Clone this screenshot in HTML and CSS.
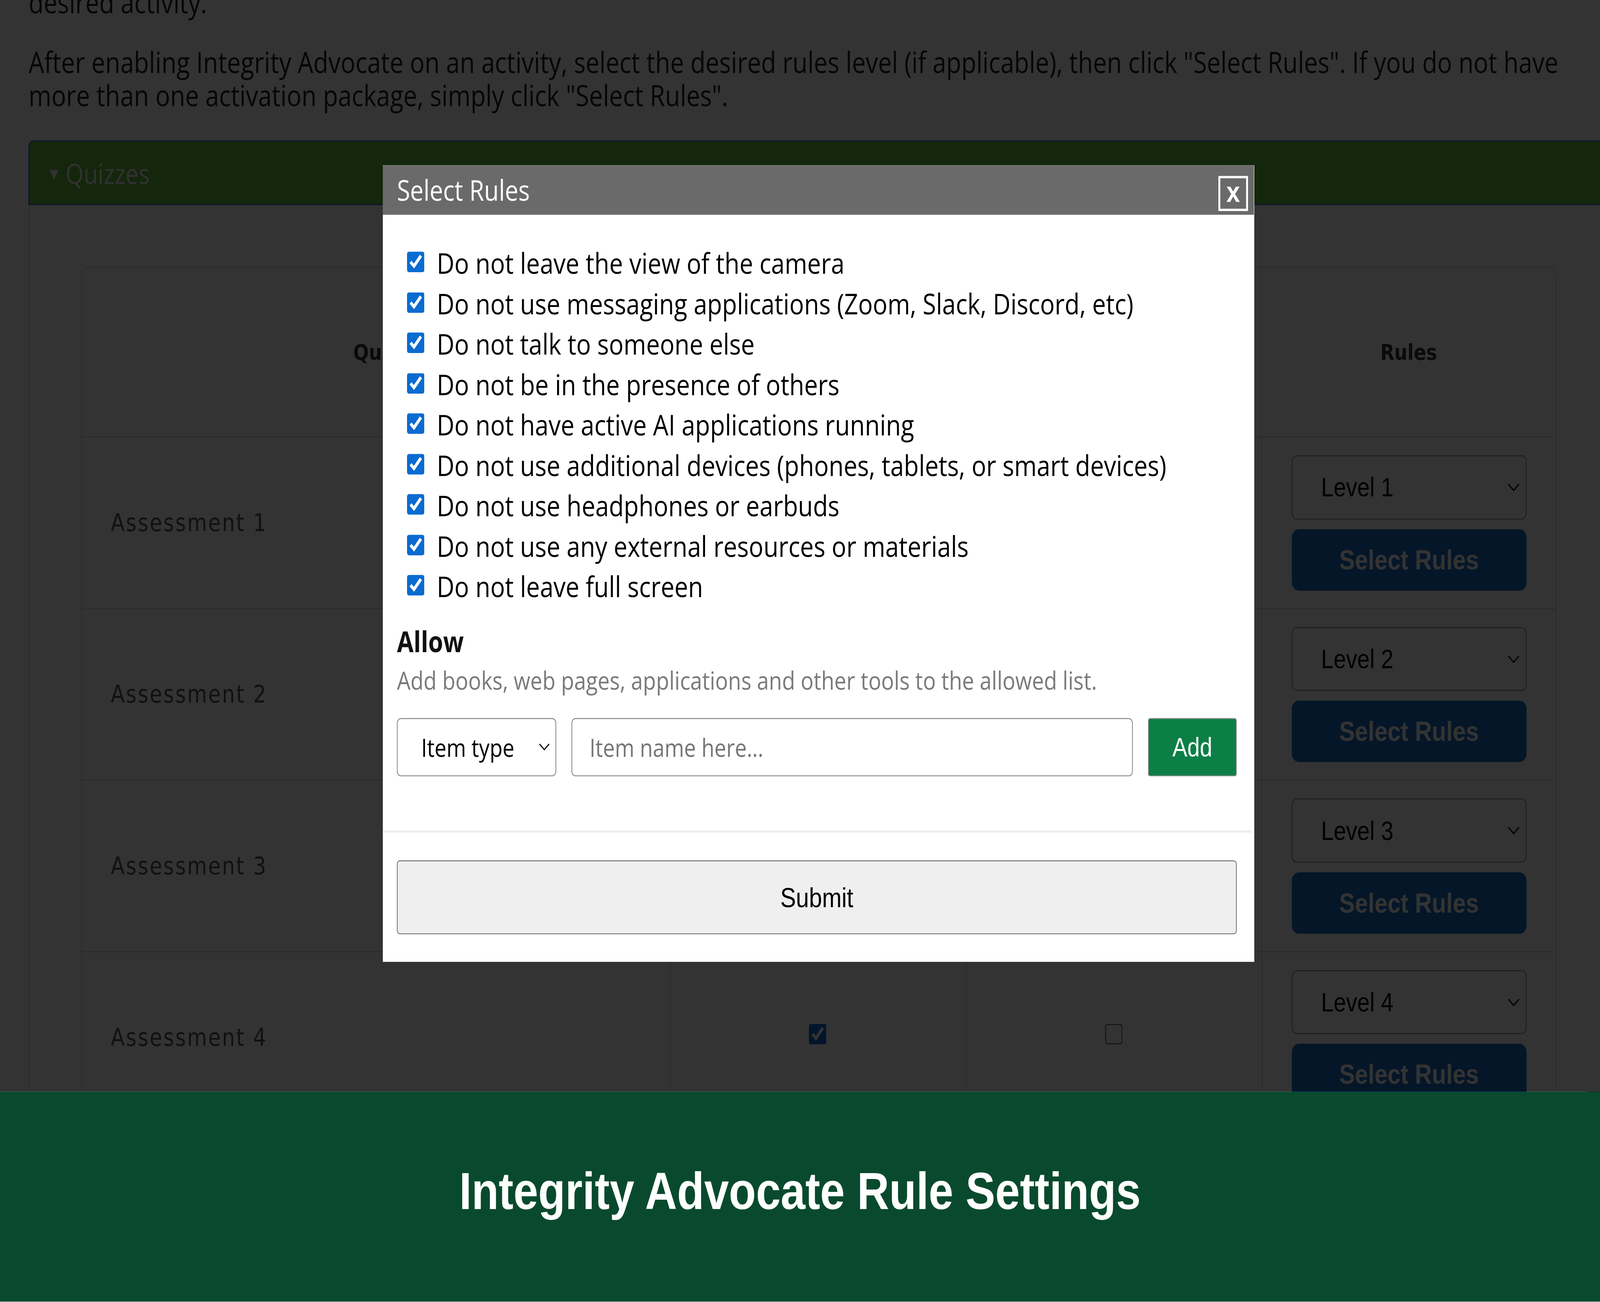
FILE: index.html
```html
<!DOCTYPE html>
<html lang="en">
    <head>
        <meta charset="UTF-8" />
        <meta name="viewport" content="width=device-width, initial-scale=1.0" />
        <title>Integrity Advocate Rule Settings</title>
        <link rel="stylesheet" href="styles.css">
    </head>
    <body>
        <div class="screen">
            <div class="stage">
                <div class="page">
                    <p class="intro">desired activity.</p>
                    <p class="intro">After enabling Integrity Advocate on an activity, select the desired rules level (if applicable), then click "Select Rules". If you do not have more than one activation package, simply click "Select Rules".</p>

                    <div class="accordion">
                        <div class="accordion-head"><span class="caret">&#9662;</span>Quizzes</div>
                        <div class="accordion-body">
                            <table class="quiz-table">
                                <colgroup>
                                    <col class="col-name">
                                    <col class="col-check">
                                    <col class="col-check">
                                    <col class="col-rules">
                                </colgroup>
                                <thead>
                                    <tr>
                                        <th>Quiz</th>
                                        <th>Enabled</th>
                                        <th>Required</th>
                                        <th>Rules</th>
                                    </tr>
                                </thead>
                                <tbody>
                                    <tr>
                                        <td class="quiz-name">Assessment 1</td>
                                        <td class="check-cell"><input type="checkbox" checked></td>
                                        <td class="check-cell"><input type="checkbox"></td>
                                        <td class="rules-cell">
                                            <div class="level-select">
                                                <select><option>Level 1</option></select>
                                                <svg class="chevron" viewBox="0 0 14 8"><path d="M1 1l6 6 6-6" /></svg>
                                            </div>
                                            <button class="rules-btn">Select Rules</button>
                                        </td>
                                    </tr>
                                    <tr>
                                        <td class="quiz-name">Assessment 2</td>
                                        <td class="check-cell"><input type="checkbox" checked></td>
                                        <td class="check-cell"><input type="checkbox"></td>
                                        <td class="rules-cell">
                                            <div class="level-select">
                                                <select><option>Level 2</option></select>
                                                <svg class="chevron" viewBox="0 0 14 8"><path d="M1 1l6 6 6-6" /></svg>
                                            </div>
                                            <button class="rules-btn">Select Rules</button>
                                        </td>
                                    </tr>
                                    <tr>
                                        <td class="quiz-name">Assessment 3</td>
                                        <td class="check-cell"><input type="checkbox" checked></td>
                                        <td class="check-cell"><input type="checkbox"></td>
                                        <td class="rules-cell">
                                            <div class="level-select">
                                                <select><option>Level 3</option></select>
                                                <svg class="chevron" viewBox="0 0 14 8"><path d="M1 1l6 6 6-6" /></svg>
                                            </div>
                                            <button class="rules-btn">Select Rules</button>
                                        </td>
                                    </tr>
                                    <tr>
                                        <td class="quiz-name">Assessment 4</td>
                                        <td class="check-cell"><input type="checkbox" checked></td>
                                        <td class="check-cell"><input type="checkbox"></td>
                                        <td class="rules-cell">
                                            <div class="level-select">
                                                <select><option>Level 4</option></select>
                                                <svg class="chevron" viewBox="0 0 14 8"><path d="M1 1l6 6 6-6" /></svg>
                                            </div>
                                            <button class="rules-btn">Select Rules</button>
                                        </td>
                                    </tr>
                                </tbody>
                            </table>
                        </div>
                    </div>
                </div>

                <div class="backdrop"></div>

                <div class="modal">
                    <div class="modal-head">
                        <span class="modal-title">Select Rules</span>
                        <button class="modal-close">x</button>
                    </div>
                    <div class="modal-body">
                        <ul class="rule-list">
                            <li class="rule"><input type="checkbox" checked><span>Do not leave the view of the camera</span></li>
                            <li class="rule"><input type="checkbox" checked><span>Do not use messaging applications (Zoom, Slack, Discord, etc)</span></li>
                            <li class="rule"><input type="checkbox" checked><span>Do not talk to someone else</span></li>
                            <li class="rule"><input type="checkbox" checked><span>Do not be in the presence of others</span></li>
                            <li class="rule"><input type="checkbox" checked><span>Do not have active AI applications running</span></li>
                            <li class="rule"><input type="checkbox" checked><span>Do not use additional devices (phones, tablets, or smart devices)</span></li>
                            <li class="rule"><input type="checkbox" checked><span>Do not use headphones or earbuds</span></li>
                            <li class="rule"><input type="checkbox" checked><span>Do not use any external resources or materials</span></li>
                            <li class="rule"><input type="checkbox" checked><span>Do not leave full screen</span></li>
                        </ul>

                        <div class="allow-title">Allow</div>
                        <div class="allow-desc">Add books, web pages, applications and other tools to the allowed list.</div>

                        <div class="allow-form">
                            <div class="type-select">
                                <select><option>Item type</option></select>
                                <svg class="chevron small" viewBox="0 0 14 8"><path d="M1 1l6 6 6-6" /></svg>
                            </div>
                            <input class="item-input" type="text" placeholder="Item name here...">
                            <button class="add-btn">Add</button>
                        </div>

                        <hr class="modal-divider">

                        <button class="submit-btn">Submit</button>
                    </div>
                </div>
            </div>

            <div class="banner">
                <h2>Integrity Advocate Rule Settings</h2>
            </div>
        </div>
    </body>
</html>
```

FILE: styles.css
```css
:root {
    --page-text: #1e1e1e;
    --quiz-green: #64be3c;
    --row-line: #d8d8d8;
    --rules-blue: #1a6ec8;
    --modal-gray: #6a6a6a;
    --check-blue: #0b6bd0;
    --add-green: #0b7f46;
    --banner-green: #094a2e;
}

/* layout is drawn at 1568x1079, the window is 4096x3334 */
html {
    zoom: 2.6122;
}

body {
    margin: 0;
    height: 1276px;
    overflow: hidden;
    font-family: "Open Sans", "Noto Sans", sans-serif;
    color: var(--page-text);
    background-color: white;
}

.screen {
    width: 1568px;
    height: 1079px;
    display: flex;
    flex-direction: column;
    transform-origin: 0 0;
    transform: scaleY(1.18255);
}

.stage {
    position: relative;
    flex: 1;
    overflow: hidden;
}

.page {
    padding: 0 28px;
    margin-top: -12px;
}

.intro {
    margin: 0 0 22px;
    font-size: 24.1px;
    line-height: 27.5px;
}

/* quizzes accordion */

.accordion {
    margin-top: 24px;
    margin-right: -80px;
}

.accordion-head {
    height: 52px;
    display: flex;
    align-items: center;
    padding-left: 20px;
    background-color: var(--quiz-green);
    border-top: 1px solid #1c3cff;
    border-bottom: 1px solid #1c3cff;
    border-left: 1px solid #1c3cff;
    border-radius: 5px 0 0 0;
    color: #f4f4f4;
    font-size: 22.8px;
}

.caret {
    font-size: 17px;
    margin-right: 7px;
}

.accordion-body {
    border-left: 1px solid var(--row-line);
    padding: 51px 0 0 51px;
}

.quiz-table {
    width: 1444px;
    table-layout: fixed;
    border-collapse: separate;
    border-spacing: 0;
    border: 1px solid var(--row-line);
    border-radius: 8px;
}

.col-name {
    width: 576px;
}

.col-check {
    width: 290px;
}

.col-rules {
    width: 288px;
}

.quiz-table th {
    height: 138px;
    font-family: "DejaVu Sans", sans-serif;
    font-weight: bold;
    font-size: 18px;
    color: #333;
    text-align: center;
}

.quiz-table td {
    border-top: 1px solid var(--row-line);
    vertical-align: middle;
}

.quiz-table td + td {
    border-left: 1px solid var(--row-line);
}

.quiz-name {
    padding-left: 28px;
    font-family: "DejaVu Sans", sans-serif;
    font-size: 20px;
    letter-spacing: 1.2px;
    color: #555;
}

.check-cell {
    text-align: center;
}

.check-cell input {
    width: 18px;
    height: 18px;
    margin: 0;
    accent-color: var(--check-blue);
}

.rules-cell {
    padding: 15px 0 14.5px;
    display: flex;
    flex-direction: column;
    align-items: center;
    gap: 8px;
}

.level-select {
    position: relative;
    width: 230px;
    height: 53px;
}

.level-select select {
    appearance: none;
    width: 100%;
    height: 100%;
    padding-left: 28px;
    border: 1px solid #8f8f8f;
    border-radius: 5px;
    background-color: white;
    font-family: "Liberation Sans", Arial, sans-serif;
    font-size: 22px;
    color: #000;
}

.chevron {
    position: absolute;
    right: 6px;
    top: 23px;
    width: 13px;
    height: 7px;
    fill: none;
    stroke: #000;
    stroke-width: 1.3;
}

.chevron.small {
    right: 6px;
    top: 20px;
    width: 11px;
    height: 7px;
}

.rules-btn {
    width: 230px;
    height: 51px;
    border: none;
    border-radius: 7px;
    background-color: var(--rules-blue);
    color: white;
    font-family: "Liberation Sans", Arial, sans-serif;
    font-weight: bold;
    font-size: 23px;
}

/* modal */

.backdrop {
    position: absolute;
    inset: 0;
    background-color: rgba(0, 0, 0, 0.8);
}

.modal {
    position: absolute;
    left: 375px;
    top: 137px;
    width: 854px;
    background-color: white;
}

.modal-head {
    height: 41px;
    display: flex;
    justify-content: space-between;
    padding: 0 6px 0 14px;
    background-color: var(--modal-gray);
}

.modal-title {
    align-self: center;
    color: white;
    font-size: 23.5px;
}

.modal-close {
    margin-top: 9px;
    width: 29px;
    height: 29px;
    padding: 0 0 2px;
    border: 2px solid white;
    background-color: var(--modal-gray);
    color: white;
    font-family: "Liberation Sans", Arial, sans-serif;
    font-weight: bold;
    font-size: 24px;
    line-height: 1;
    display: flex;
    align-items: flex-end;
    justify-content: center;
}

.modal-body {
    padding: 23px 17px 23px 14px;
}

.rule-list {
    list-style: none;
    margin: 0;
    padding: 0 0 0 10px;
}

.rule {
    height: 33.5px;
    display: flex;
    align-items: center;
    gap: 11px;
    font-size: 23.9px;
    color: #000;
}

.rule input {
    width: 18px;
    height: 18px;
    margin: 0;
    accent-color: var(--check-blue);
}

.allow-title {
    margin-top: 14px;
    font-weight: bold;
    font-size: 23.6px;
    line-height: 30px;
    color: #111;
}

.allow-desc {
    margin-top: 3px;
    font-size: 21px;
    line-height: 28px;
    color: #7a7a7a;
}

.allow-form {
    display: flex;
    gap: 15px;
    height: 48px;
    margin-top: 18px;
}

.type-select {
    position: relative;
    width: 156px;
}

.type-select select {
    appearance: none;
    width: 100%;
    height: 100%;
    padding-left: 23px;
    border: 1px solid #8a8a8a;
    border-radius: 4px;
    background-color: white;
    font-family: "Open Sans", sans-serif;
    font-size: 20.7px;
    color: #000;
}

.item-input {
    flex: 1;
    padding: 0 17px;
    border: 1px solid #8a8a8a;
    border-radius: 4px;
    font-family: "Open Sans", sans-serif;
    font-size: 20.7px;
}

.item-input::placeholder {
    color: #767676;
}

.add-btn {
    width: 87px;
    border: 1px solid #8a8a8a;
    border-radius: 2px;
    background-color: var(--add-green);
    color: white;
    font-family: "Liberation Sans", Arial, sans-serif;
    font-size: 22px;
}

.modal-divider {
    margin: 45px -14px 0 -14px;
    border: none;
    border-top: 2px solid #eeeeee;
}

.submit-btn {
    display: block;
    width: 100%;
    height: 61px;
    margin-top: 23px;
    border: 1px solid #767676;
    border-radius: 3px;
    background-color: #efefef;
    color: #000;
    font-family: "Liberation Sans", Arial, sans-serif;
    font-size: 23px;
}

/* caption */

.banner {
    height: 174px;
    padding-bottom: 10px;
    box-sizing: border-box;
    display: flex;
    align-items: center;
    justify-content: center;
    background-color: var(--banner-green);
}

.banner h2 {
    margin: 0;
    color: white;
    font-family: "Liberation Sans", Arial, sans-serif;
    font-weight: bold;
    font-size: 43.5px;
}
```
